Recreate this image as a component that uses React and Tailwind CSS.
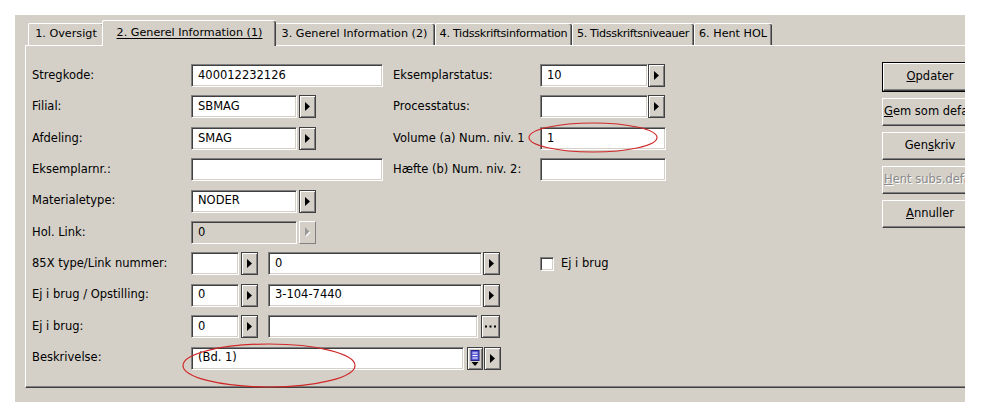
import React from "react";

function Field({ className = "", value = "", disabled = false }) {
  return (
    <div
      className={`h-[23px] shrink-0 border border-t-[#808080] border-l-[#808080] border-r-white border-b-white shadow-[inset_1px_1px_0_#404040,inset_-1px_-1px_0_#d4d0c8] flex items-center pl-[6px] overflow-hidden whitespace-nowrap ${
        disabled ? "bg-[#d4d0c8]" : "bg-white"
      } ${className}`}
    >
      {value}
    </div>
  );
}

function Arrow({ className = "", disabled = false }) {
  if (disabled) {
    return (
      <div
        className={`w-[17px] h-[23px] shrink-0 bg-[#d4d0c8] border border-t-white border-l-white border-r-[#808080] border-b-[#808080] flex items-center justify-center ${className}`}
      >
        <svg width="6" height="10" viewBox="0 0 6 10">
          <path d="M1 1 L5.5 5.5 L1 10 Z" fill="#ffffff" />
          <path d="M0 0 L4.5 4.5 L0 9 Z" fill="#9a9a9a" />
        </svg>
      </div>
    );
  }
  return (
    <div
      className={`w-[17px] h-[23px] shrink-0 bg-[#d4d0c8] border border-[#404040] shadow-[inset_1px_1px_0_#ffffff,inset_-1px_-1px_0_#808080] flex items-center justify-center ${className}`}
    >
      <svg width="5" height="9" viewBox="0 0 5 9">
        <path d="M0 0 L5 4.5 L0 9 Z" fill="#000000" />
      </svg>
    </div>
  );
}

function Dots({ className = "" }) {
  return (
    <div
      className={`w-[19px] h-[23px] shrink-0 bg-[#d4d0c8] border border-[#404040] shadow-[inset_1px_1px_0_#ffffff,inset_-1px_-1px_0_#808080] flex items-center justify-center ${className}`}
    >
      <svg width="11" height="3" viewBox="0 0 11 3">
        <rect x="0" y="0.5" width="2" height="2" fill="#000" />
        <rect x="4.5" y="0.5" width="2" height="2" fill="#000" />
        <rect x="9" y="0.5" width="2" height="2" fill="#000" />
      </svg>
    </div>
  );
}

function ListBtn({ className = "" }) {
  return (
    <div
      className={`w-[16px] h-[23px] shrink-0 bg-[#d4d0c8] border border-[#404040] shadow-[inset_1px_1px_0_#ffffff,inset_-1px_-1px_0_#808080] flex items-center justify-center ${className}`}
    >
      <svg width="10" height="17" viewBox="0 0 10 17">
        <rect x="1" y="0.5" width="8" height="10" fill="#5a5ad8" stroke="#202080" strokeWidth="1" />
        <rect x="2.5" y="2.5" width="5" height="1" fill="#ffffff" />
        <rect x="2.5" y="5" width="5" height="1" fill="#ffffff" />
        <rect x="2.5" y="7.5" width="5" height="1" fill="#ffffff" />
        <path d="M1.5 12 L8.5 12 L5 16 Z" fill="#000000" />
      </svg>
    </div>
  );
}

function Checkbox({ className = "" }) {
  return (
    <div
      className={`w-[14px] h-[14px] shrink-0 bg-white border border-t-[#808080] border-l-[#808080] border-r-white border-b-white shadow-[inset_1px_1px_0_#404040,inset_-1px_-1px_0_#d4d0c8] ${className}`}
    />
  );
}

function Label({ children, className = "w-[159px]" }) {
  return <span className={`shrink-0 whitespace-nowrap ${className}`}>{children}</span>;
}

function Row({ children }) {
  return <div className="flex items-center h-[23px]">{children}</div>;
}

function Tab({ children, className = "", selected = false }) {
  if (selected) {
    return (
      <div
        className={`relative z-10 -mx-[2px] -mb-[1px] h-[26px] bg-[#d4d0c8] border-t border-l border-t-white border-l-white rounded-tl-[2px] rounded-tr-[2px] shadow-[inset_-1px_0_0_#404040,inset_-2px_0_0_#808080] flex items-center justify-center pb-[1px] whitespace-nowrap ${className}`}
      >
        {children}
      </div>
    );
  }
  return (
    <div
      className={`h-[22px] bg-[#d4d0c8] border-t border-l border-t-white border-l-white rounded-tl-[2px] rounded-tr-[2px] shadow-[inset_-1px_0_0_#404040,inset_-2px_0_0_#808080] flex items-center justify-center pb-[2px] pr-[1px] whitespace-nowrap ${className}`}
    >
      {children}
    </div>
  );
}

function Btn({ children, isDefault = false, disabled = false, className = "" }) {
  const inner = (
    <div
      className={`h-full w-full bg-[#d4d0c8] border border-t-white border-l-white border-r-[#404040] border-b-[#404040] shadow-[inset_-1px_-1px_0_#808080] flex items-center justify-center-safe whitespace-nowrap overflow-hidden px-[1px] ${
        disabled ? "text-[#8a8a8a] [text-shadow:1px_1px_0_#ffffff]" : "text-black"
      }`}
    >
      {children}
    </div>
  );
  if (isDefault) {
    return <div className={`w-[96px] h-[30px] border border-black ${className}`}>{inner}</div>;
  }
  return <div className={`w-[96px] h-[28px] ${className}`}>{inner}</div>;
}

export default function App() {
  return (
    <div className="relative w-[982px] h-[411px] bg-white overflow-hidden font-['DejaVu_Sans',sans-serif] text-[11.5px] text-black leading-none">
      <div className="ml-[15px] mt-[15px] w-[950px] h-[387px] bg-[#d4d0c8] overflow-hidden pt-[5px]">
        {/* Tabs */}
        <div className="flex items-end h-[25px] ml-[13px] text-[11.2px]">
          <Tab className="w-[76px]">1. Oversigt</Tab>
          <Tab selected className="w-[174px]">
            <span className="underline underline-offset-[2px]">2. Generel Information (1)</span>
          </Tab>
          <Tab className="w-[161px]">3. Generel Information (2)</Tab>
          <Tab className="w-[137px] tracking-[-0.3px]">4. Tidsskriftsinformation</Tab>
          <Tab className="w-[122px] tracking-[-0.35px]">5. Tidsskriftsniveauer</Tab>
          <Tab className="w-[78px]">6. Hent HOL</Tab>
        </div>

        {/* Panel */}
        <div className="ml-[10px] w-[960px] h-[343px] border-t border-l border-b border-t-white border-l-white border-b-[#404040] shadow-[inset_0_-1px_0_#808080] flex">
          {/* Form */}
          <div className="w-[856px] shrink-0 pl-[6px] pt-[18px] flex flex-col gap-[8.4px]">
            <Row>
              <Label>Stregkode:</Label>
              <Field className="w-[192px]" value="400012232126" />
              <Label className="w-[147px] ml-[10px]">Eksemplarstatus:</Label>
              <Field className="w-[108px]" value="10" />
              <Arrow />
            </Row>
            <Row>
              <Label>Filial:</Label>
              <Field className="w-[106px]" value="SBMAG" />
              <Arrow className="ml-[2px]" />
              <Label className="w-[147px] ml-[77px]">Processtatus:</Label>
              <Field className="w-[108px]" value="" />
              <Arrow />
            </Row>
            <Row>
              <Label>Afdeling:</Label>
              <Field className="w-[106px]" value="SMAG" />
              <Arrow className="ml-[2px]" />
              <Label className="w-[147px] ml-[77px]">Volume (a) Num. niv. 1</Label>
              <Field className="w-[126px]" value="1" />
            </Row>
            <Row>
              <Label>Eksemplarnr.:</Label>
              <Field className="w-[192px]" value="" />
              <Label className="w-[147px] ml-[10px]">Hæfte (b) Num. niv. 2:</Label>
              <Field className="w-[126px]" value="" />
            </Row>
            <Row>
              <Label>Materialetype:</Label>
              <Field className="w-[106px]" value="NODER" />
              <Arrow className="ml-[2px]" />
            </Row>
            <Row>
              <Label>Hol. Link:</Label>
              <Field className="w-[106px]" value="0" disabled />
              <Arrow className="ml-[2px]" disabled />
            </Row>
            <Row>
              <Label>85X type/Link nummer:</Label>
              <Field className="w-[48px]" value="" />
              <Arrow className="ml-[2px]" />
              <Field className="w-[214px] ml-[10px]" value="0" />
              <Arrow className="ml-[1px]" />
              <Checkbox className="ml-[40px]" />
              <span className="ml-[7px] whitespace-nowrap">Ej i brug</span>
            </Row>
            <Row>
              <Label>Ej i brug / Opstilling:</Label>
              <Field className="w-[48px]" value="0" />
              <Arrow className="ml-[2px]" />
              <Field className="w-[214px] ml-[10px]" value="3-104-7440" />
              <Arrow className="ml-[1px]" />
            </Row>
            <Row>
              <Label>Ej i brug:</Label>
              <Field className="w-[48px]" value="0" />
              <Arrow className="ml-[2px]" />
              <Field className="w-[210px] ml-[10px]" value="" />
              <Dots className="ml-[3px]" />
            </Row>
            <Row>
              <Label>Beskrivelse:</Label>
              <Field className="w-[273px]" value="(Bd. 1)" />
              <ListBtn className="ml-[3px]" />
              <Arrow className="ml-[1px]" />
            </Row>
          </div>

          {/* Buttons */}
          <div className="flex flex-col gap-[6px] pt-[16px]">
            <Btn isDefault>
              <span>
                <span className="underline">O</span>pdater
              </span>
            </Btn>
            <Btn>
              <span>
                <span className="underline">G</span>em som default
              </span>
            </Btn>
            <Btn>
              <span>
                Gen<span className="underline">s</span>kriv
              </span>
            </Btn>
            <Btn disabled>
              <span>
                <span className="underline">H</span>ent subs.default
              </span>
            </Btn>
            <Btn>
              <span>
                <span className="underline">A</span>nnuller
              </span>
            </Btn>
          </div>
        </div>
      </div>

      {/* Red annotation ellipses */}
      <svg
        className="absolute left-0 top-0 pointer-events-none"
        width="982"
        height="411"
        viewBox="0 0 982 411"
      >
        <ellipse cx="593" cy="137.5" rx="64" ry="14.5" fill="none" stroke="#d02828" strokeWidth="1.2" />
        <ellipse cx="269" cy="365.5" rx="86" ry="21.5" fill="none" stroke="#d02828" strokeWidth="1.2" />
      </svg>
    </div>
  );
}
